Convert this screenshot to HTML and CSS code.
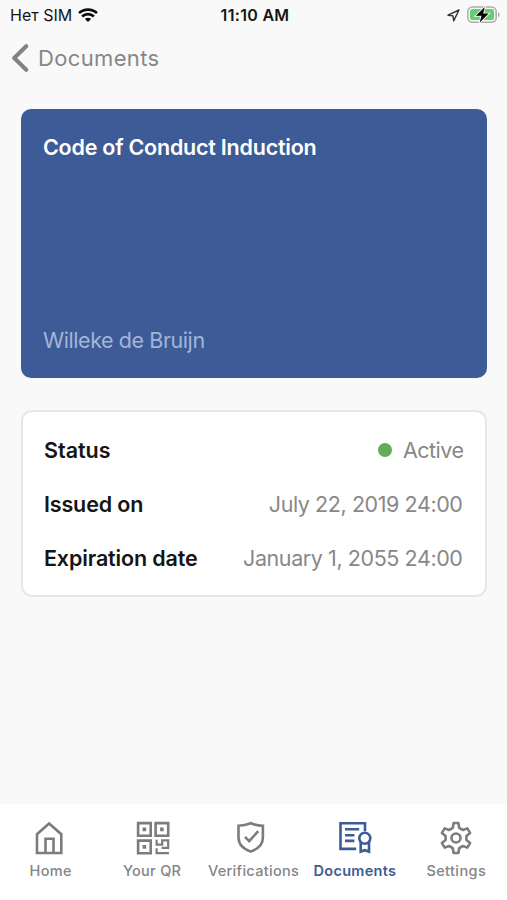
FILE: index.html
```html
<!DOCTYPE html>
<html lang="en">
<head>
<meta charset="utf-8">
<meta name="viewport" content="width=device-width, initial-scale=1">
<title>Documents</title>
<link rel="stylesheet" href="styles.css">
</head>
<body>
<div class="app">
  <header class="statusbar">
    <div class="carrier">
      <span>Нет SIM</span>
      <svg class="wifi" width="20" height="15" viewBox="0 0 20 15" fill="none" stroke="#0b0b0b" stroke-width="2.7">
        <path d="M1 5.1a13.2 13.2 0 0 1 18 0"/>
        <path d="M4.1 8.500a8.7 8.7 0 0 1 11.8 0"/>
        <path d="M10 14.100 6.9 11a4.4 4.4 0 0 1 6.2 0Z" fill="#0b0b0b" stroke="none"/>
      </svg>
    </div>
    <span class="clock">11:10 AM</span>
    <div class="indicators">
      <svg width="13" height="13" viewBox="0 0 13 13" fill="none" stroke="#333" stroke-width="1.4" stroke-linejoin="round"><path d="M12 1 1 6.2l5 .7.7 5Z"/></svg>
      <svg width="33" height="19" viewBox="0 0 33 19">
        <rect x=".8" y=".9" width="28.4" height="15.4" rx="4.8" fill="none" stroke="#adadad" stroke-width="1.5"/>
        <rect x="3" y="3.1" width="24" height="11" rx="2.6" fill="#66cf6c"/>
        <path d="M31 6.2v5c2-.7 2-4.300 0-5Z" fill="#adadad"/>
        <path d="M17.800 1 8.800 9.800h5.700l-1.800 6.600 9-8.800h-5.600Z" fill="#000" stroke="#f9f9f9" stroke-width="1.800" paint-order="stroke"/>
      </svg>
    </div>
  </header>
  <div class="back">
    <svg width="18" height="28" viewBox="0 0 18 28" fill="none" stroke="#828282" stroke-width="4" stroke-linecap="round" stroke-linejoin="round"><path d="M15.200 2.200 3.200 14l12 11.800"/></svg>
    <span>Documents</span>
  </div>
  <main>
    <section class="card">
      <h1>Code of Conduct Induction</h1>
      <p>Willeke de Bruijn</p>
    </section>
    <dl class="details">
      <div class="row"><dt class="status">Status</dt><dd class="state"><i class="dot"></i>Active</dd></div>
      <div class="row"><dt>Issued on</dt><dd>July 22, 2019 24:00</dd></div>
      <div class="row"><dt>Expiration date</dt><dd>January 1, 2055 24:00</dd></div>
    </dl>
  </main>
  <nav class="tabs">
    <a class="tab home">
      <svg viewBox="0 0 36 36"><path d="M6 33V14.200L18.100 3.500l12.200 10.700V33ZM14.500 33V18.800h8V33"/></svg>
      <span>Home</span>
    </a>
    <a class="tab qr">
      <svg viewBox="0 0 36 36"><path d="M3.100 3.100h12.600v12.600H3.100ZM20.600 3.100h12.600v12.600H20.600ZM3.100 20.600h12.600v12.600H3.100Z"/><path class="fine" d="M21.600 19.800v4.900h5.600v-4.300h6v7.400h-6.600M21.600 28.200v5h12.400"/><path class="solid" d="M7.600 7.600h3.600v3.600H7.600ZM25.100 7.600h3.600v3.600h-3.600ZM7.600 25.100h3.600v3.600H7.600Z"/></svg>
      <span>Your QR</span>
    </a>
    <a class="tab shield">
      <svg viewBox="0 0 36 36"><path d="M17.700 3.200c3.700 1.500 7.700 2.400 12.200 2.600v11.600c0 6.800-4.800 11.400-12.200 14.200C10.300 28.800 5.500 24.200 5.500 17.400V5.800C10 5.600 14 4.700 17.700 3.200Z"/><path d="m12 16.800 4.200 4.400 9-10"/></svg>
      <span>Verifications</span>
    </a>
    <a class="tab current">
      <svg viewBox="0 0 36 36"><path d="M19.200 28.900H3.500V3.200H28v8M8 9.300h14.200M8 15.300h9.400M8 20.900h9.400"/><circle cx="27.800" cy="18.300" r="5.500"/><path d="M23.700 22v9.600l4.100-1.400 4.200 1.400V22"/></svg>
      <span>Documents</span>
    </a>
    <a class="tab gear">
      <svg viewBox="0 0 36 36"><path d="M15.600 3h4.800l.8 4.900 3.700 2.100 4.400-1.600 2.800 4.500-3.700 3v4.200l3.700 3-2.800 4.500-4.400-1.600-3.700 2.100-.8 4.900h-4.800l-.8-4.900-3.700-2.100-4.400 1.600-2.800-4.500 3.700-3v-4.200l-3.700-3 2.800-4.500 4.400 1.600 3.700-2.100Z"/><circle cx="18" cy="18" r="4.500"/></svg>
      <span>Settings</span>
    </a>
  </nav>
</div>
</body>
</html>
```
FILE: styles.css
```css
* { box-sizing: border-box; margin: 0; padding: 0; }
body { background: #f9f9f9; font-family: Inter, "Liberation Sans", sans-serif; color: #151515; }
svg { display: block; flex: none; }
.app { height: 900px; display: flex; flex-direction: column; overflow: hidden; }
.statusbar { height: 30px; display: grid; grid-template-columns: 1fr auto 1fr; align-items: center; padding: 0 7px 0 10px; font-size: 16px; }
.carrier { display: flex; align-items: center; gap: 6px; letter-spacing: 0; }
.clock { font-weight: 600; letter-spacing: .3px; }
.indicators { display: flex; justify-content: flex-end; align-items: center; gap: 7px; }
.back { height: 55px; display: flex; align-items: center; gap: 9px; padding-left: 11px; color: #878787; font-size: 22px; letter-spacing: .35px; }
.back span { padding-top: 1px; }
main { flex: 1; padding: 24px 20.500px 0 21px; }
.card { height: 269px; border-radius: 10px; background: #3d5b96; padding: 24px 22px; display: flex; flex-direction: column; justify-content: space-between; }
.card h1 { font-size: 21.500px; line-height: 28px; font-weight: 600; letter-spacing: -.23px; color: #fff; }
.card p { font-size: 21.500px; line-height: 28px; letter-spacing: -.43px; color: #a3b5d7; }
.details { margin-top: 32px; height: 187px; border: 2px solid #e7e7e7; border-radius: 11px; background: #fff; padding: 11px 22px 13px 21px; }
.row { height: 54px; display: flex; align-items: center; justify-content: space-between; font-size: 21.500px; }
dt { font-weight: 600; letter-spacing: -.15px; }
.status { letter-spacing: 0; }
dd { color: #888; display: flex; align-items: center; letter-spacing: -.42px; }
.state { letter-spacing: -.5px; margin-right: -1px; }
.dot { width: 14px; height: 14px; border-radius: 50%; background: #63ad59; margin-right: 11px; }
.tabs { height: 96px; background: #fff; display: grid; grid-template-columns: repeat(5, 1fr); }
.tab { display: flex; flex-direction: column; align-items: center; padding-top: 16px; color: #858585; font-size: 14.500px; font-weight: 500; white-space: nowrap; }
.tab svg { width: 36px; height: 36px; fill: none; stroke: #7c7c7c; stroke-width: 2.600; }
.tab .solid { fill: #7c7c7c; stroke: none; }
.tab .fine { stroke-width: 2.200; }
.tab span { line-height: 20px; margin-top: 5px; letter-spacing: .3px; }
.home svg, .shield svg { margin-right: 4px; }
.qr svg { margin-left: 1px; }
.gear svg { stroke-linejoin: round; }
.current { color: #3d5b96; font-weight: 600; }
.tab.current svg { stroke: #3d5b96; }
.gear span { letter-spacing: .4px; }
```
